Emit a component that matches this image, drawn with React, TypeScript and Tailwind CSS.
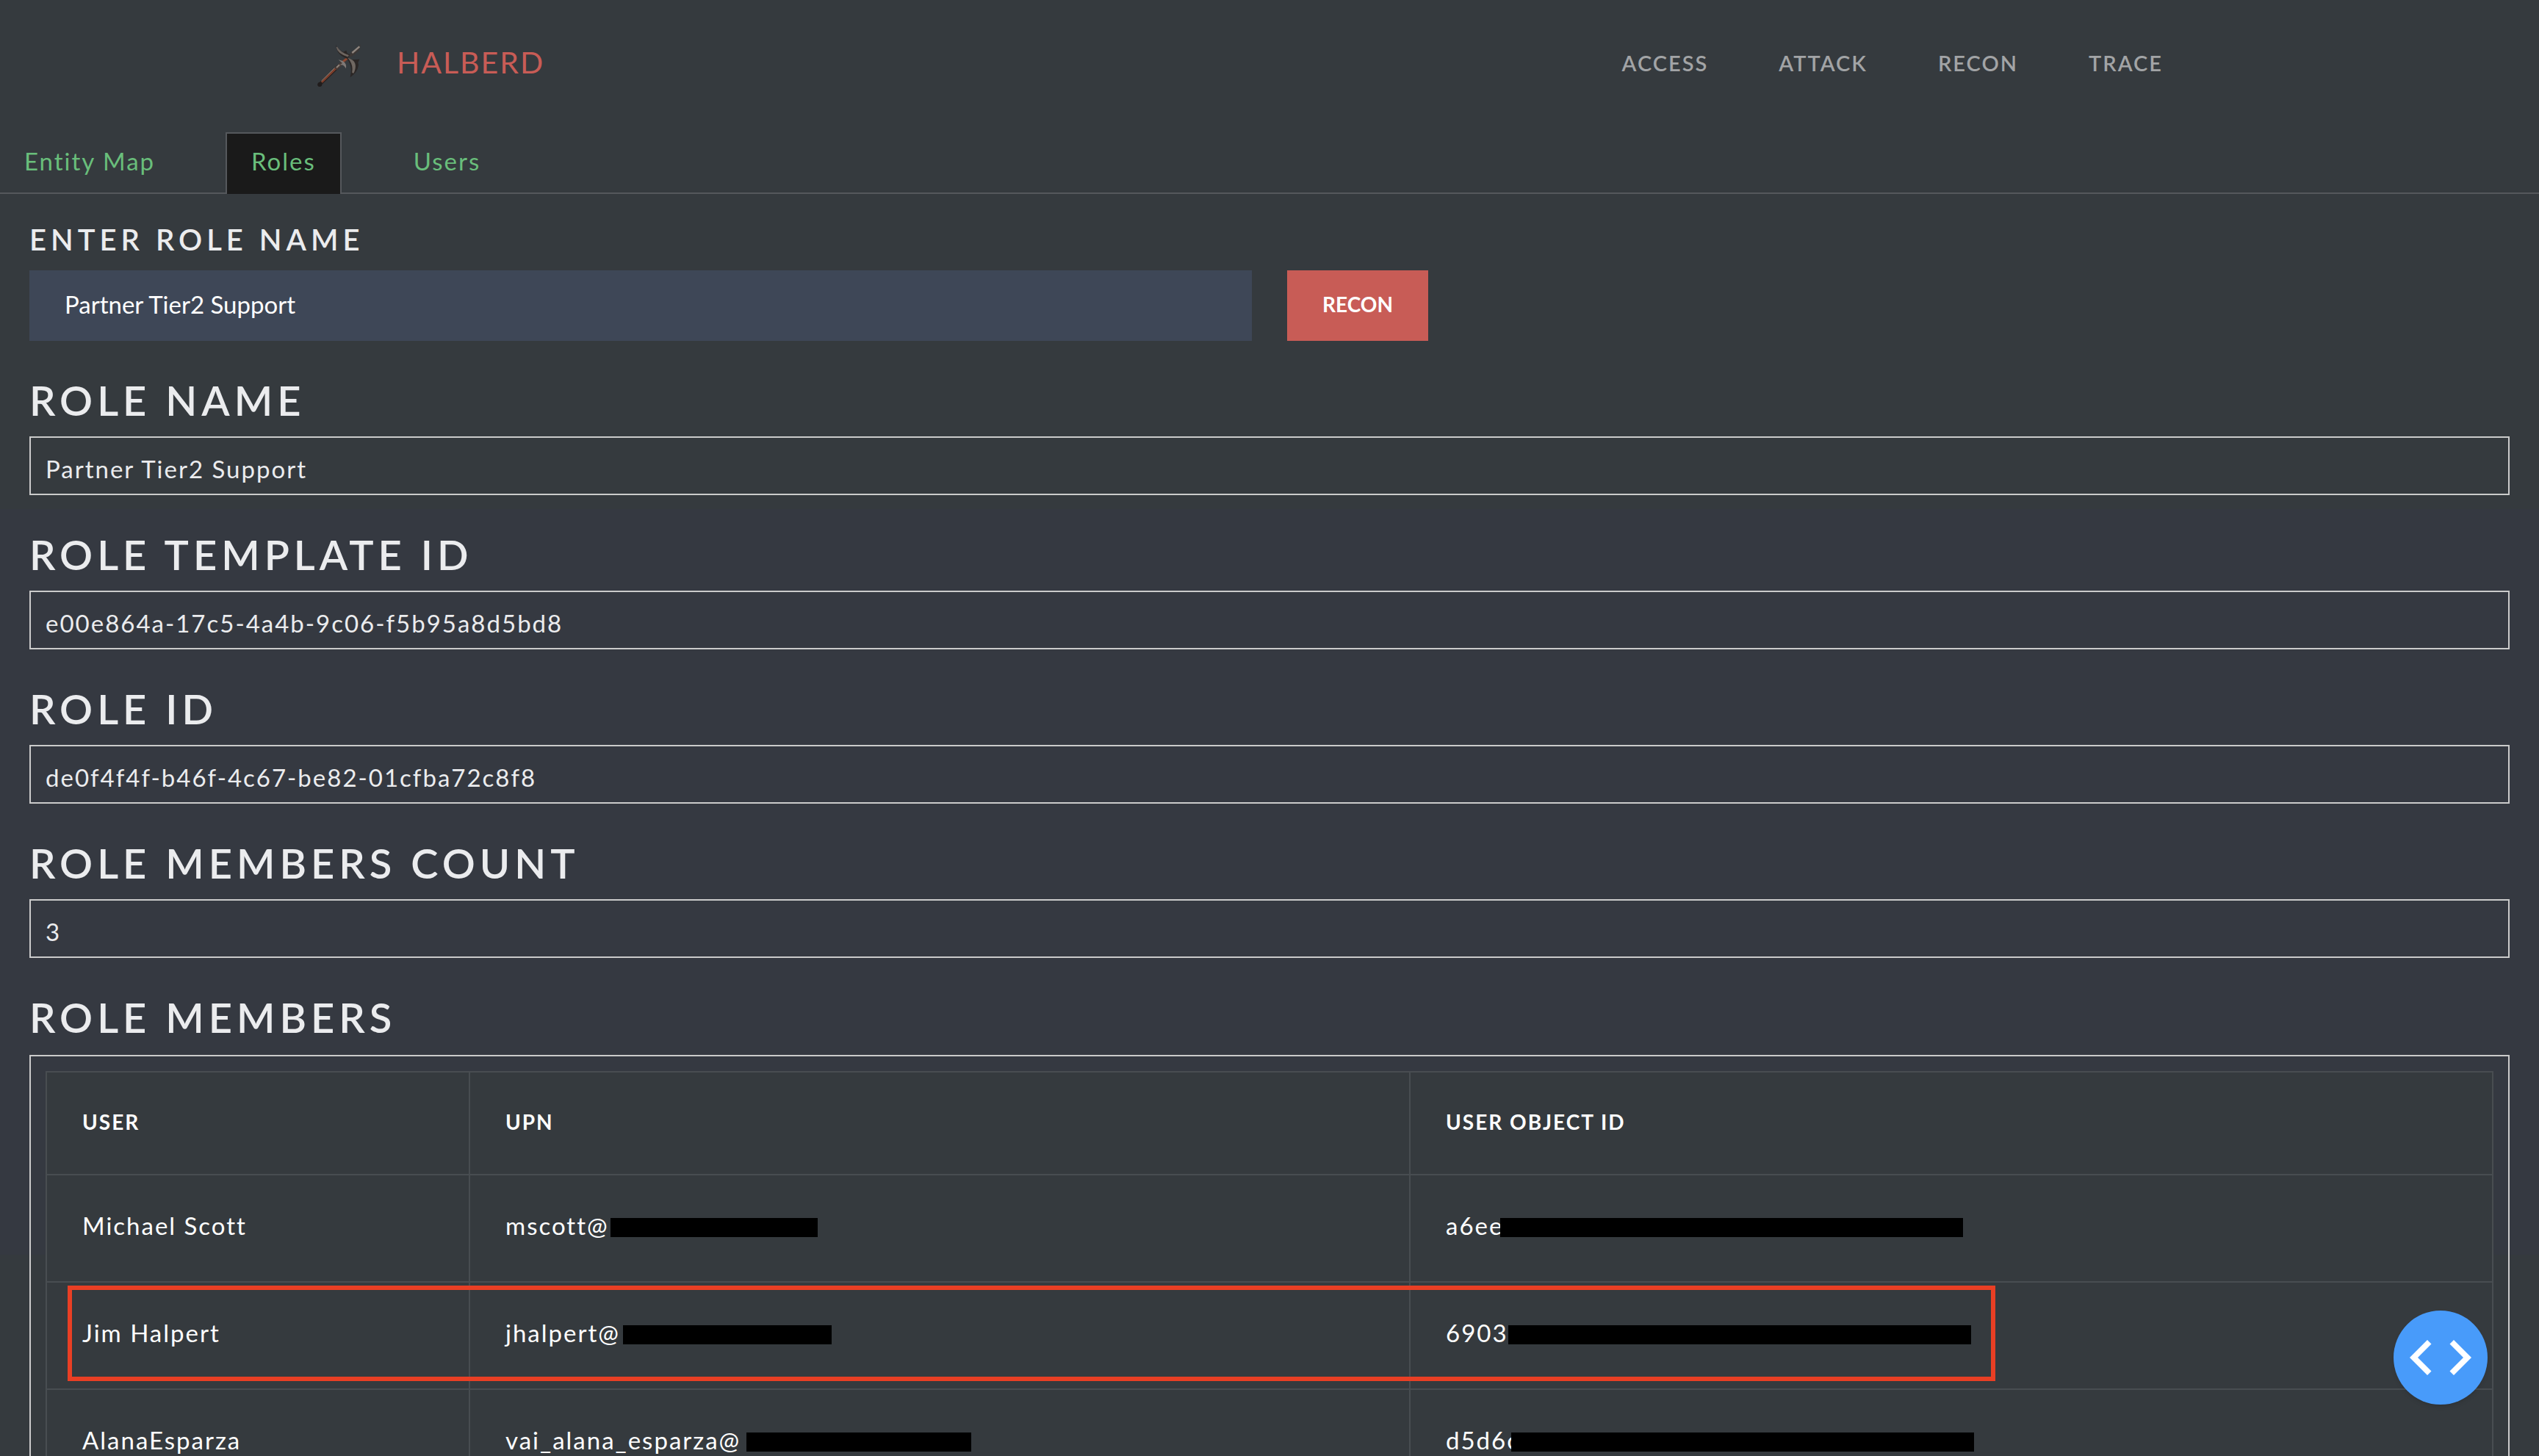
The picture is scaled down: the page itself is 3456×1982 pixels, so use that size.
import React from "react";

const navItems = ["ACCESS", "ATTACK", "RECON", "TRACE"];

const fields = [
  { title: "ROLE NAME", value: "Partner Tier2 Support" },
  { title: "ROLE TEMPLATE ID", value: "e00e864a-17c5-4a4b-9c06-f5b95a8d5bd8" },
  { title: "ROLE ID", value: "de0f4f4f-b46f-4c67-be82-01cfba72c8f8" },
  { title: "ROLE MEMBERS COUNT", value: "3" },
];

const members = [
  { name: "Michael Scott", upn: "mscott@", upnBar: "ml-0.5 w-[282px]", id: "a6ee", idBar: "-ml-1", marked: false },
  { name: "Jim Halpert", upn: "jhalpert@", upnBar: "ml-1 w-[284px]", id: "6903", idBar: "", marked: true },
  { name: "AlanaEsparza", upn: "vai_alana_esparza@", upnBar: "ml-2 w-[306px]", id: "d5d6c", idBar: "-ml-3", marked: false },
];

function HalberdLogo() {
  return (
    <svg viewBox="0 0 210 192" className="h-16 w-[70px]" aria-hidden="true">
      <path d="M14 178 L88 106" stroke="#2a211f" strokeWidth="14" strokeLinecap="round" />
      <path d="M24 168 L84 109" stroke="#84412d" strokeWidth="7" />
      <path d="M22 163 L78 108" stroke="#9a8a80" strokeWidth="3" />
      <path d="M80 114 L124 74" stroke="#4a3b36" strokeWidth="13" />
      <path d="M84 108 L96 97" stroke="#8e857d" strokeWidth="6" />
      <path d="M110 84 L128 70" stroke="#94482f" strokeWidth="8" />
      <path d="M81 13 C84 25 96 38 112 44 L124 38 L128 50 L144 56 L128 72 C104 64 84 48 81 13Z" fill="#2b2625" />
      <path d="M85 24 C88 44 104 54 130 62 L132 58 C108 50 96 42 85 24Z" fill="#7f766f" stroke="#6a625d" strokeWidth="4" />
      <path d="M134 62 L146 42 L164 32 L183 13 L176 38 L158 54 L144 64Z" fill="#3d3735" />
      <path d="M148 48 L178 22" stroke="#8f867f" strokeWidth="7" />
      <path d="M126 66 L148 76 L178 74 L172 88 L174 96 C172 120 158 134 140 148 C146 124 146 100 130 76Z" fill="#2b2625" />
      <path d="M140 76 C162 86 162 106 151 130 C156 104 150 90 140 76Z" fill="#8b827b" stroke="#6f6761" strokeWidth="7" />
      <path d="M92 76 L108 80 C122 88 126 100 122 112 C114 96 106 96 96 98 L108 90 Z" fill="#7f7976" />
      <circle cx="16" cy="177" r="9" fill="#201c1c" />
    </svg>
  );
}

function Redacted({ className }: { className: string }) {
  return <span className={"inline-block h-[26px] bg-black align-[-3px] " + className} />;
}

export default function App() {
  return (
    <div className="h-screen overflow-hidden bg-[linear-gradient(#353a3e_0_693px,#353941_693px_1708px,#353a3e_1708px)] font-['Lato',sans-serif] text-[33px] leading-[48px] text-[#ebecee]">
      <header className="mx-auto flex h-[180px] w-full max-w-[2640px] items-start justify-between pt-14 pr-[104px] pl-[22px]">
        <a href="#home" className="flex items-start gap-10">
          <HalberdLogo />
          <span className="text-[41px] leading-[58px] tracking-[2px] text-[#c85c56]">HALBERD</span>
        </a>
        <nav className="flex gap-24 pt-[6px] text-[29px] font-semibold tracking-[2px] text-[#a2a4a6]">
          {navItems.map((n) => (
            <a key={n} href={"#" + n.toLowerCase()}>{n}</a>
          ))}
        </nav>
      </header>

      <div role="tablist" className="flex h-[84px] border-b-2 border-[#55585c] tracking-[2px] text-[#69be7b]">
        <button role="tab" className="w-[307px] pb-1 pl-[33px] text-left">Entity Map</button>
        <button role="tab" aria-selected="true" className="-mb-0.5 border-2 border-b-0 border-[#55585c] bg-[#1a1a1a] px-[33px] pb-2">Roles</button>
        <button role="tab" className="ml-[98px] pb-1">Users</button>
      </div>

      <main className="px-10 pt-[38px]">
        <label htmlFor="role" className="block text-[40px] font-semibold tracking-[6px]">ENTER ROLE NAME</label>
        <div className="mt-[18px] grid grid-cols-2 gap-12">
          <input id="role" defaultValue="Partner Tier2 Support" className="h-24 bg-[#3e4757] px-12 pb-1 text-white outline-none" />
          <button className="h-24 justify-self-start bg-[#c85c56] px-12 pb-1 text-[28px] font-bold text-white">RECON</button>
        </div>

        {fields.map((f) => (
          <section key={f.title} className="pt-12">
            <h2 className="text-[56px] leading-[66px] font-semibold tracking-[6px]">{f.title}</h2>
            <p className="mt-4 h-20 border-2 border-[#cbcbcb] px-5 pt-[18px] tracking-[2px]">{f.value}</p>
          </section>
        ))}

        <section className="pt-12">
          <h2 className="text-[56px] leading-[66px] font-semibold tracking-[6px]">ROLE MEMBERS</h2>
          <div className="mt-[18px] border-2 border-[#cbcbcb] p-5">
            <table className="w-full table-fixed border-collapse bg-[#353a3e] text-left tracking-[2px] text-white">
              <colgroup>
                <col className="w-[576px]" />
                <col className="w-[1280px]" />
                <col />
              </colgroup>
              <thead>
                <tr className="h-[140px] text-[28px]">
                  <th className="border-2 border-[#484d51] px-12 pb-1 font-bold">USER</th>
                  <th className="border-2 border-[#484d51] px-12 pb-1 font-bold">UPN</th>
                  <th className="border-2 border-[#484d51] px-12 pb-1 font-bold">USER OBJECT ID</th>
                </tr>
              </thead>
              <tbody>
                {members.map((m) => (
                  <tr key={m.name} className="h-[146px]">
                    <td className="relative border-2 border-[#484d51] px-12 pb-2">
                      {m.name}
                      {m.marked && (
                        <span className="pointer-events-none absolute top-1 left-7 z-10 h-[130px] w-[2624px] border-[6px] border-[#e93f24]" />
                      )}
                    </td>
                    <td className="border-2 border-[#484d51] px-12 pb-2">
                      {m.upn}
                      <Redacted className={m.upnBar} />
                    </td>
                    <td className="border-2 border-[#484d51] px-12 pb-2">
                      {m.id}
                      <Redacted className={"w-[630px] " + m.idBar} />
                    </td>
                  </tr>
                ))}
              </tbody>
            </table>
          </div>
        </section>
      </main>

      <button aria-label="Toggle debug menu" className="fixed right-[70px] bottom-[70px] z-20 size-32 rounded-full bg-[#489bfa] shadow-md">
        <svg viewBox="0 0 128 128" className="size-full" fill="#fff" aria-hidden="true">
          <path d="M22 64 L46 40 L51.5 45.5 L33 64 L51.5 82.5 L46 88Z" />
          <path d="M106 64 L82 40 L76.5 45.5 L95 64 L76.5 82.5 L82 88Z" />
        </svg>
      </button>
    </div>
  );
}
